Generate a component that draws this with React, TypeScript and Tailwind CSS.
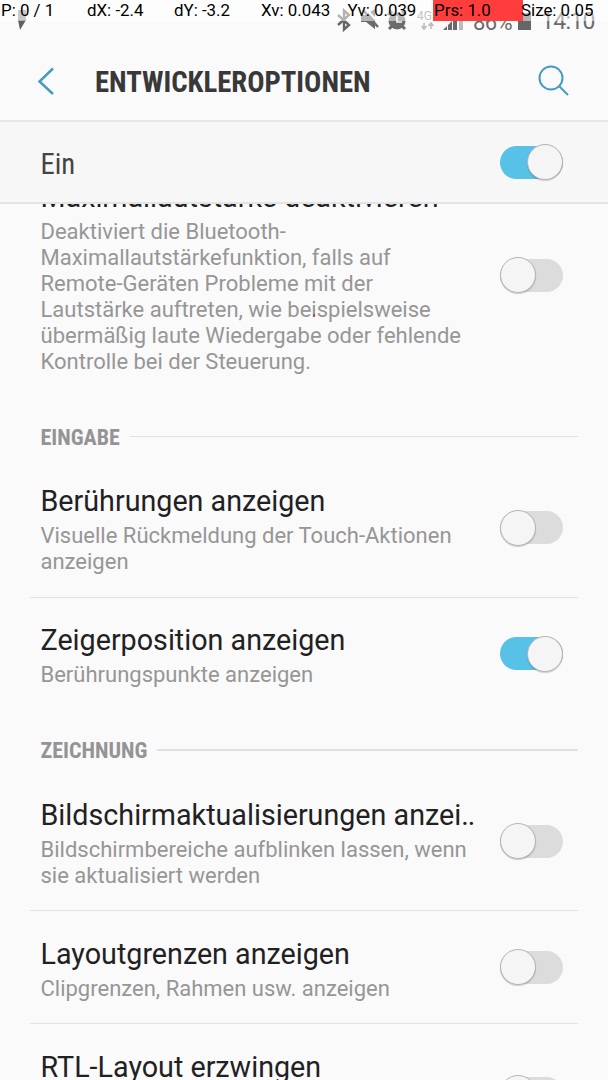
import type { ReactNode } from "react";

function Toggle({ on = false }: { on?: boolean }) {
  return (
    <span
      className={`relative flex h-[33px] w-[63px] shrink-0 items-center rounded-full ${
        on ? "justify-end bg-[#57c1e8]" : "justify-start bg-[#dcdcdc]"
      }`}
    >
      <span className="h-9 w-9 shrink-0 rounded-full border border-[#b4b4b4] bg-[#f5f5f5] shadow-[0_1px_1px_rgba(0,0,0,0.18)]" />
    </span>
  );
}

function Row({
  title,
  lines,
  on,
  divider,
}: {
  title: ReactNode;
  lines: string[];
  on?: boolean;
  divider?: boolean;
}) {
  return (
    <div className="shrink-0 pl-[30px] pr-[30px]">
      <div
        className={`flex items-center justify-between border-b pl-[10.5px] pr-[15px] ${
          divider ? "border-[#e3e3e3]" : "border-transparent"
        }`}
      >
        <div className="whitespace-nowrap pb-[21.5px] pt-[25.5px]">
          <div className="mb-[5px] text-[28.7px] leading-[34px] text-[#1f2123]">{title}</div>
          {lines.map((l) => (
            <div key={l} className="text-[22px] leading-[26px] text-[#969696]">
              {l}
            </div>
          ))}
        </div>
        <Toggle on={on} />
      </div>
    </div>
  );
}

function Category({ label }: { label: string }) {
  return (
    <div className="flex h-[61.5px] shrink-0 items-start gap-2.5 pl-[40.5px] pr-[30px] pt-[27.5px]">
      <span className="font-['Roboto_Condensed',Roboto,sans-serif] text-[22px] font-bold leading-[26px] text-[#949494] [font-stretch:75%]">
        {label}
      </span>
      <span className="mt-[11px] h-[1.5px] flex-1 bg-[#e0e0e0]" />
    </div>
  );
}

function StatusBar() {
  return (
    <div className="relative h-[42px] shrink-0 text-[#6a6a6a]">
      <svg className="absolute inset-0" width="608" height="42" viewBox="0 0 608 42">
        <path d="M18 10h8v11h-8z" fill="#909090" />
        <path d="M18 20h8l-6 10z" fill="#606060" />
        <path d="M338 15l11 10-5 4.500v-19l5 4.500-11 10" fill="none" stroke="#666" strokeWidth="2.400" />
        <path d="M361 15h5l9-6v20l-9-7h-5z" fill="#6c6c6c" />
        <path d="M361 21v-6h5l9-6v20l-9-8z" fill="#6c6c6c" />
        <path d="M365 8l15 16" stroke="#fafafa" strokeWidth="2" />
        <path d="M363 10l15 17" stroke="#6c6c6c" strokeWidth="2.500" />
        <circle cx="397" cy="21" r="8.500" fill="#6c6c6c" />
        <path d="M389 29l4-4M405 29l-4-4M388 15l4-4M406 15l-4-4" stroke="#6c6c6c" strokeWidth="3" />
        <path d="M397 16v6h5" stroke="#fafafa" strokeWidth="1.500" fill="none" />
        <path d="M424 29v-6m-2.500 3l2.500 3 2.500-3M431 23v6m-2.500-3l2.500-3 2.500 3" fill="none" stroke="#bbb" strokeWidth="1.500" />
        <path d="M443 30l4-4v4zM448 30v-5l4-4v9zM453 30v-10l4-4v14z" fill="#6a6a6a" />
        <path d="M459 14h4v16h-4z" fill="#bbb" />
        <path d="M518 13h13v17h-13z" fill="#666" />
      </svg>
      <span className="absolute left-[417px] top-[8px] text-[12px] leading-4 text-[#888]">4G</span>
      <span className="absolute left-[473px] top-[9px] text-[22px] leading-7 tracking-[-0.6px]">86%</span>
      <span className="absolute left-[541px] top-[8px] text-[23px] leading-7 tracking-[-0.7px]">14:10</span>
    </div>
  );
}

function PointerBar() {
  return (
    <div className="absolute inset-x-0 top-0 h-[21px] bg-white/50 text-[16.900px] leading-[20px] text-black">
      <span className="absolute left-[433px] top-0 h-[21px] w-[90px] bg-[#ff3d3d]" />
      <span className="absolute left-[1px] top-0 whitespace-nowrap">P: 0 / 1</span>
      <span className="absolute left-[87px] top-0 whitespace-nowrap">dX: -2.4</span>
      <span className="absolute left-[174px] top-0 whitespace-nowrap">dY: -3.2</span>
      <span className="absolute left-[261px] top-0 whitespace-nowrap">Xv: 0.043</span>
      <span className="absolute left-[347.500px] top-0 whitespace-nowrap">Yv: 0.039</span>
      <span className="absolute left-[434px] top-0 whitespace-nowrap">Prs: 1.0</span>
      <span className="absolute left-[521px] top-0 whitespace-nowrap">Size: 0.05</span>
    </div>
  );
}

export default function App() {
  return (
    <div className="relative flex h-[1080px] w-[608px] flex-col overflow-hidden bg-[#fafafa] font-[Roboto,sans-serif]">
      <StatusBar />
      <header className="flex h-[80px] shrink-0 items-center border-b-2 border-[#e6e6e6] pl-[36px] pr-[38px]">
        <svg width="20" height="30" viewBox="0 0 20 30" fill="none" stroke="#459bc0" strokeWidth="2.500">
          <path d="M17 2.500L3.500 15.500l13.500 12.500" />
        </svg>
        <h1 className="ml-[39px] mt-[2px] flex-1 whitespace-nowrap font-['Roboto_Condensed',Roboto,sans-serif] text-[28.700px] font-bold leading-9 text-[#383838] [font-stretch:75%]">
          ENTWICKLEROPTIONEN
        </h1>
        <svg width="32" height="32" viewBox="0 0 32 32" fill="none" stroke="#459bc0" strokeWidth="2">
          <circle cx="13" cy="13" r="11.500" />
          <path d="M21 21l9 9" />
        </svg>
      </header>
      <div className="flex h-[82px] shrink-0 items-center justify-between border-b-2 border-[#e4e4e4] bg-[#f7f7f7] pl-[40.500px] pr-[45px]">
        <span className="mt-[3px] font-['Roboto_Condensed',Roboto,sans-serif] text-[28.700px] leading-9 text-[#444] [font-stretch:75%]">
          Ein
        </span>
        <Toggle on />
      </div>
      <main className="flex min-h-0 flex-1 flex-col overflow-hidden">
        <div className="-mt-[50px] flex shrink-0 flex-col">
          <Row
            title="Maximallautstärke deaktivieren"
            lines={[
              "Deaktiviert die Bluetooth-",
              "Maximallautstärkefunktion, falls auf",
              "Remote-Geräten Probleme mit der",
              "Lautstärke auftreten, wie beispielsweise",
              "übermäßig laute Wiedergabe oder fehlende",
              "Kontrolle bei der Steuerung.",
            ]}
          />
          <Category label="EINGABE" />
          <Row title="Berührungen anzeigen" lines={["Visuelle Rückmeldung der Touch-Aktionen", "anzeigen"]} divider />
          <Row title="Zeigerposition anzeigen" lines={["Berührungspunkte anzeigen"]} on />
          <Category label="ZEICHNUNG" />
          <Row
            title={
              <>
                Bildschirmaktualisierungen anzei<span className="tracking-[-1px]">..</span>
              </>
            }
            lines={["Bildschirmbereiche aufblinken lassen, wenn", "sie aktualisiert werden"]}
            divider
          />
          <Row title="Layoutgrenzen anzeigen" lines={["Clipgrenzen, Rahmen usw. anzeigen"]} divider />
          <Row
            title="RTL-Layout erzwingen"
            lines={["Layout für alle Sprachen von rechts", "nach links anzeigen"]}
          />
        </div>
      </main>
      <span className="absolute left-[313px] top-[314px] h-[3px] w-[2px] rounded-full bg-[#e03040]" />
      <PointerBar />
    </div>
  );
}
